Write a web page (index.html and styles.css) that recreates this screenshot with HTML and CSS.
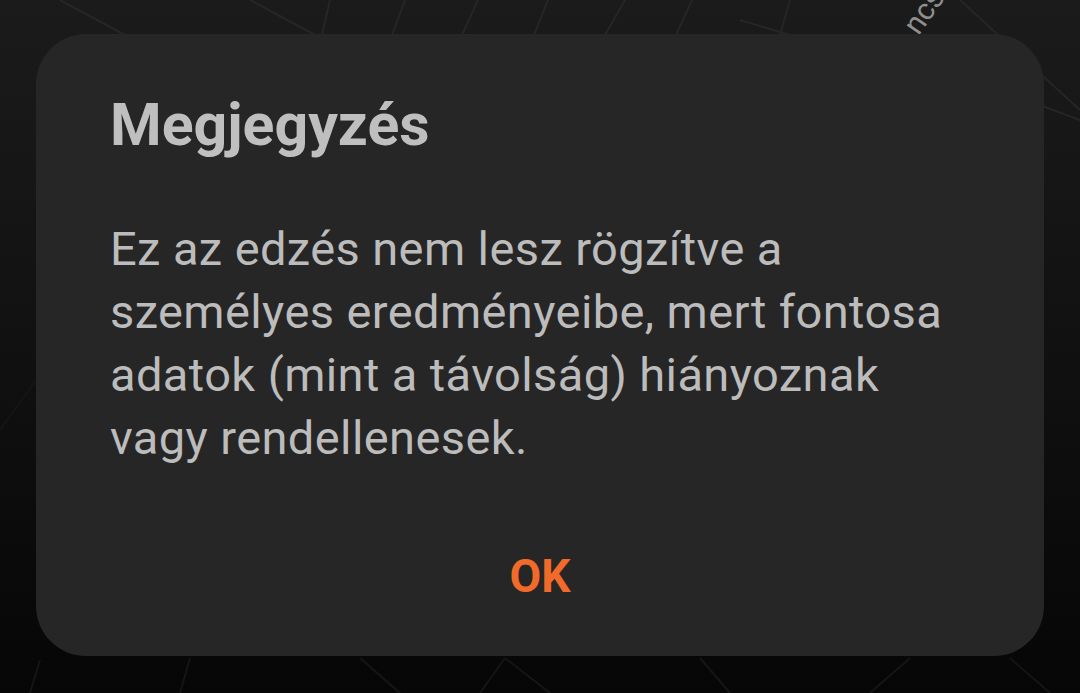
FILE: index.html
```html
<!DOCTYPE html>
<html lang="hu">
<head>
    <meta charset="UTF-8">
    <meta name="viewport" content="width=device-width, initial-scale=1.0">
    <title>Megjegyzés</title>
    <link rel="stylesheet" href="styles.css">
</head>
<body>

<div class="map">
    <svg class="map-lines" width="1080" height="693" viewBox="0 0 1080 693">
        <g stroke="#262626" stroke-width="2" fill="none">
            <line x1="60" y1="0" x2="125" y2="35"/>
            <line x1="250" y1="0" x2="315" y2="35"/>
            <line x1="330" y1="0" x2="322" y2="35"/>
            <line x1="405" y1="0" x2="392" y2="35"/>
            <line x1="478" y1="0" x2="462" y2="35"/>
            <line x1="548" y1="0" x2="534" y2="35"/>
            <line x1="625" y1="0" x2="605" y2="35"/>
            <line x1="692" y1="0" x2="676" y2="35"/>
            <line x1="790" y1="0" x2="780" y2="35"/>
            <line x1="740" y1="20" x2="790" y2="35"/>
            <line x1="960" y1="0" x2="1080" y2="110"/>
            <line x1="1000" y1="90" x2="1080" y2="120"/>
        </g>
        <g stroke="#151515" stroke-width="2" fill="none">
            <line x1="0" y1="430" x2="36" y2="380"/>
            <line x1="30" y1="693" x2="40" y2="660"/>
            <line x1="180" y1="693" x2="190" y2="658"/>
            <line x1="400" y1="693" x2="360" y2="658"/>
            <line x1="480" y1="693" x2="505" y2="658"/>
            <line x1="550" y1="693" x2="505" y2="658"/>
            <line x1="730" y1="693" x2="700" y2="658"/>
            <line x1="870" y1="693" x2="910" y2="658"/>
            <line x1="1050" y1="693" x2="1010" y2="658"/>
        </g>
    </svg>
    <span class="map-label">ncs</span>
</div>

<div class="dialog">
    <h2 class="dialog-title">Megjegyzés</h2>
    <p class="dialog-text">Ez az edzés nem lesz rögzítve a<br>személyes eredményeibe, mert fontosa<br>adatok (mint a távolság) hiányoznak<br>vagy rendellenesek.</p>
    <div class="dialog-actions">
        <button class="dialog-btn">OK</button>
    </div>
</div>

</body>
</html>
```
FILE: styles.css
```css
body {
    margin: 0;
    width: 1080px;
    height: 693px;
    overflow: hidden;
    font-family: Roboto, "Noto Sans", sans-serif;
    background: linear-gradient(to bottom, #1b1b1b 0%, #121212 45%, #060606 100%);
    position: relative;
    padding: 34px 36px 0;
    box-sizing: border-box;
}
.map {
    position: absolute;
    left: 0;
    top: 0;
    width: 1080px;
    height: 693px;
}
.map-lines {
    display: block;
}
.map-label {
    position: absolute;
    left: 898px;
    top: 22px;
    font-size: 30px;
    line-height: 1;
    color: #8f8f8f;
    transform: rotate(-55deg);
    transform-origin: left top;
}
.dialog {
    position: relative;
    height: 622px;
    background: #262626;
    border-radius: 50px;
    padding: 0 74px;
    box-sizing: border-box;
    display: flex;
    flex-direction: column;
}
.dialog-title {
    margin: 0;
    padding-top: 61px;
    font-size: 59px;
    font-weight: 700;
    line-height: 1;
    color: #bfbfbf;
}
.dialog-text {
    margin: 63px 0 0;
    font-size: 47px;
    letter-spacing: 0.4px;
    line-height: 63px;
    color: #bcbcbc;
    white-space: nowrap;
}
.dialog-actions {
    margin-top: auto;
    padding-bottom: 53px;
    display: flex;
    justify-content: center;
}
.dialog-btn {
    background: none;
    border: none;
    padding: 0;
    font-family: inherit;
    font-size: 46px;
    font-weight: 700;
    color: #f26a2a;
}
```
